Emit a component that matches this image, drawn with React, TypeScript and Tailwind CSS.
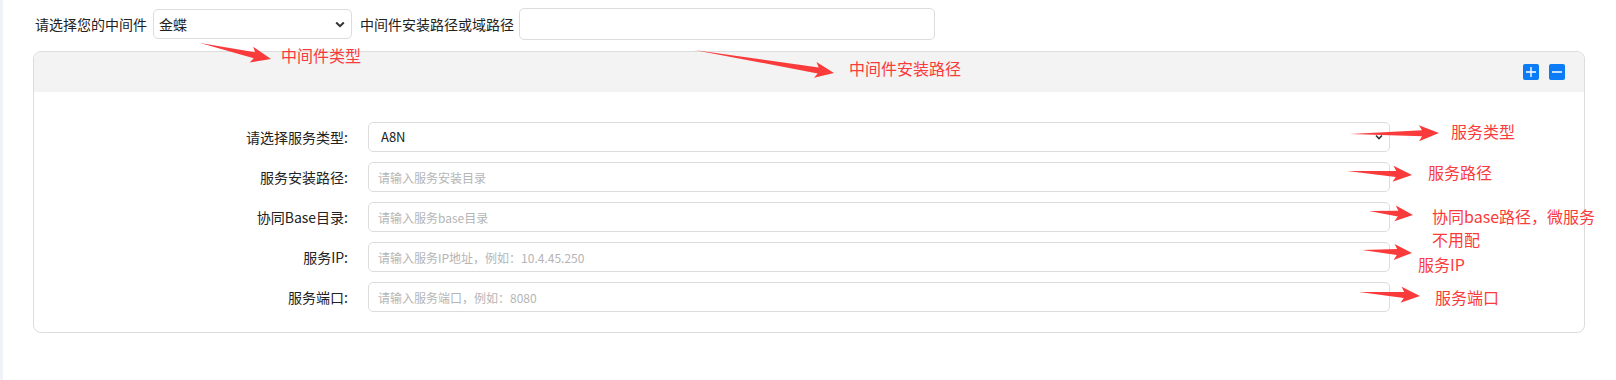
import React from "react";

type Arrow = { tx: number; ty: number; hx: number; hy: number; hl?: number; hw?: number; sw?: number };

function arrowPoints(a: Arrow): string {
  const hl = a.hl ?? 17;
  const hw = a.hw ?? 8;
  const sw = a.sw ?? 3;
  const dx = a.hx - a.tx;
  const dy = a.hy - a.ty;
  const L = Math.hypot(dx, dy);
  const ux = dx / L;
  const uy = dy / L;
  const nx = -uy;
  const ny = ux;
  const bx = a.hx - ux * hl;
  const by = a.hy - uy * hl;
  const back = 3;
  const pts: [number, number][] = [
    [a.tx, a.ty],
    [bx + nx * sw, by + ny * sw],
    [bx - ux * back + nx * hw, by - uy * back + ny * hw],
    [a.hx, a.hy],
    [bx - ux * back - nx * hw, by - uy * back - ny * hw],
    [bx - nx * sw, by - ny * sw],
  ];
  return pts.map((p) => `${p[0].toFixed(1)},${p[1].toFixed(1)}`).join(" ");
}

const arrows: Arrow[] = [
  { tx: 200, ty: 43, hx: 271, hy: 59, hl: 17, hw: 8, sw: 3 },
  { tx: 694, ty: 50, hx: 834, hy: 73, hl: 16, hw: 8, sw: 3 },
  { tx: 1350, ty: 134, hx: 1439, hy: 133, hl: 17, hw: 8, sw: 3 },
  { tx: 1347, ty: 171, hx: 1412, hy: 175, hl: 16, hw: 8, sw: 3 },
  { tx: 1369, ty: 211, hx: 1413, hy: 215, hl: 15, hw: 8, sw: 3 },
  { tx: 1362, ty: 250, hx: 1412, hy: 253, hl: 15, hw: 8, sw: 3 },
  { tx: 1359, ty: 292, hx: 1420, hy: 296, hl: 16, hw: 8, sw: 3 },
];

const font = { fontFamily: '"Noto Sans CJK SC", "Noto Sans", sans-serif' };

function Row({ label, children }: { label: string; children: React.ReactNode }) {
  return (
    <div className="flex items-center h-[30px]">
      <div className="w-[334px] shrink-0 pr-[20px] text-right text-[14px] leading-[30px] text-[#222]">{label}</div>
      {children}
    </div>
  );
}

function TextInput({ placeholder }: { placeholder: string }) {
  return (
    <input
      className="w-[1022px] h-[30px] border border-[#dcdcdc] rounded-[5px] px-[9px] text-[12px] text-[#333] placeholder:text-[#b5b5b5] outline-none bg-white"
      placeholder={placeholder}
    />
  );
}

export default function App() {
  return (
    <div className="relative flex min-h-[380px] w-[1616px] bg-white overflow-hidden" style={font}>
      <div className="w-[3px] shrink-0 bg-[#eff2f8]" />
      <div className="flex-1 pl-[30px] pr-[31px]">
        <div className="flex items-center pt-[8px] h-[40px] pl-[2px]">
          <span className="text-[14px] text-[#222] leading-[20px]">请选择您的中间件</span>
          <div className="ml-[6px] w-[199px] h-[30px] border border-[#dcdcdc] rounded-[5px] flex items-center justify-between pl-[5px] pr-[6px] bg-white">
            <span className="text-[14px] text-[#222] leading-[20px]">金蝶</span>
            <svg width="10" height="7" viewBox="0 0 10 7">
              <path d="M1.2 1.5 L5 5.2 L8.8 1.5" fill="none" stroke="#333" strokeWidth="2" />
            </svg>
          </div>
          <span className="ml-[8px] text-[14px] text-[#222] leading-[20px]">中间件安装路径或域路径</span>
          <input className="ml-[5px] w-[416px] h-[32px] border border-[#dcdcdc] rounded-[5px] bg-white outline-none" />
        </div>

        <div className="mt-[11px] border border-[#dcdcdc] rounded-[8px] overflow-hidden">
          <div className="h-[40px] bg-[#f3f3f3] flex items-center justify-end gap-[10px] pr-[19px]">
            <div className="w-[16px] h-[16px] rounded-[2px] bg-[#0b7cf6] flex items-center justify-center">
              <svg width="12" height="12" viewBox="0 0 12 12">
                <path d="M6 1 V11 M1 6 H11" stroke="#fff" strokeWidth="1.4" />
              </svg>
            </div>
            <div className="w-[16px] h-[16px] rounded-[2px] bg-[#0b7cf6] flex items-center justify-center">
              <svg width="12" height="12" viewBox="0 0 12 12">
                <path d="M1 6 H11" stroke="#fff" strokeWidth="1.4" />
              </svg>
            </div>
          </div>
          <div className="pt-[30px] pb-[20px] flex flex-col gap-[10px]">
            <Row label="请选择服务类型:">
              <div className="w-[1022px] h-[30px] border border-[#dcdcdc] rounded-[5px] flex items-center justify-between pl-[12px] pr-[6px] bg-white">
                <span className="text-[13px] text-[#222] leading-[20px]">A8N</span>
                <svg width="8" height="6" viewBox="0 0 8 6">
                  <path d="M1 1.5 L4 4.5 L7 1.5" fill="none" stroke="#333" strokeWidth="1.6" />
                </svg>
              </div>
            </Row>
            <Row label="服务安装路径:">
              <TextInput placeholder="请输入服务安装目录" />
            </Row>
            <Row label="协同Base目录:">
              <TextInput placeholder="请输入服务base目录" />
            </Row>
            <Row label="服务IP:">
              <TextInput placeholder="请输入服务IP地址，例如：10.4.45.250" />
            </Row>
            <Row label="服务端口:">
              <TextInput placeholder="请输入服务端口，例如：8080" />
            </Row>
          </div>
        </div>
      </div>

      <svg className="absolute inset-0 pointer-events-none" width="1616" height="380" viewBox="0 0 1616 380">
        {arrows.map((a, i) => (
          <polygon key={i} points={arrowPoints(a)} fill="#fa3b3b" />
        ))}
      </svg>

      <div className="absolute left-[281px] top-[45px] text-[16px] leading-[20px] text-[#fa3b3b] whitespace-nowrap">中间件类型</div>
      <div className="absolute left-[849px] top-[58px] text-[16px] leading-[20px] text-[#fa3b3b] whitespace-nowrap">中间件安装路径</div>
      <div className="absolute left-[1451px] top-[121px] text-[16px] leading-[20px] text-[#fa3b3b] whitespace-nowrap">服务类型</div>
      <div className="absolute left-[1428px] top-[162px] text-[16px] leading-[20px] text-[#fa3b3b] whitespace-nowrap">服务路径</div>
      <div className="absolute left-[1432px] top-[205px] text-[16px] leading-[23px] text-[#fa3b3b] whitespace-nowrap">
        协同base路径，微服务
        <br />
        不用配
      </div>
      <div className="absolute left-[1418px] top-[254px] text-[16px] leading-[20px] text-[#fa3b3b] whitespace-nowrap">服务IP</div>
      <div className="absolute left-[1435px] top-[287px] text-[16px] leading-[20px] text-[#fa3b3b] whitespace-nowrap">服务端口</div>
    </div>
  );
}
